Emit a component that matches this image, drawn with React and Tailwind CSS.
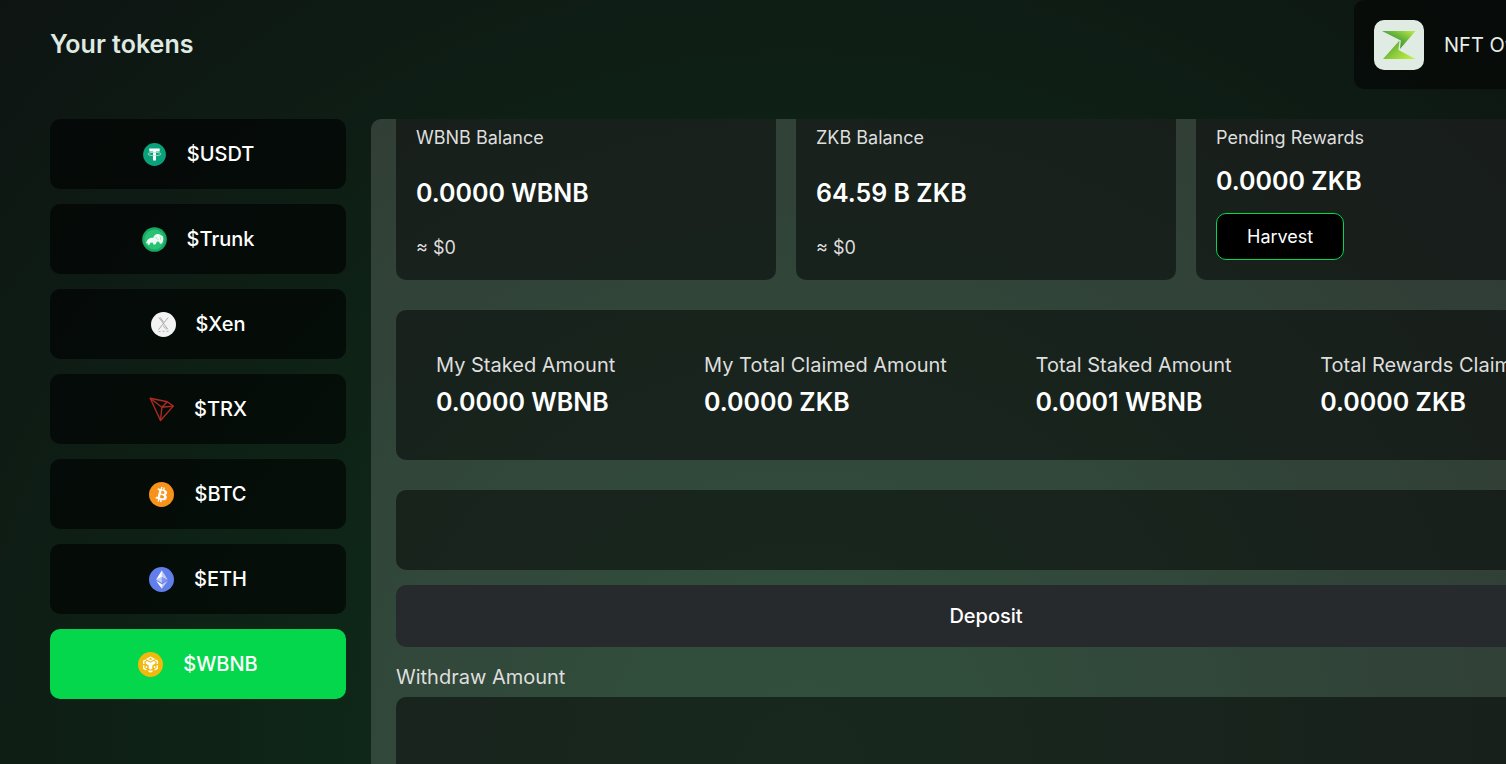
const UsdtIcon = () => (
  <svg viewBox="0 0 25 25" className="size-[25px]">
    <circle cx="12.5" cy="12.5" r="11.4" fill="#0aa27a" />
    <path d="M7.3 6.400h10.400v3h-3.700V18.500h-3V9.400H7.300z" fill="#fff" />
    <ellipse cx="12.5" cy="12" rx="6.5" ry="1.7" fill="none" stroke="#a9e0cf" strokeWidth="0.9" />
  </svg>
);

const TrunkIcon = () => (
  <svg viewBox="0 0 25 25" className="size-[25px]">
    <circle cx="12.5" cy="12.5" r="12.3" fill="#17a864" />
    <circle cx="12.5" cy="12.5" r="10" fill="#28c274" />
    <path
      d="M4.2 16.6c.3-2.600 1.500-4.600 3.800-5.400 1.200-.5 2.300-.4 3.200-.3.300-1.700 1.600-3 3.300-3.600 1.500-.6 2.900-.3 3.900.6l2.400 1.300c.7 2.400.5 4.700-.5 6.600-.6 1.200-1.600 1.300-2.400.7l-1-1.700-1.900-.2-1.300 2.600-2.200.6-.6-2-2.300-.2-.9 2-1.700.5-.4-1.800z"
      fill="#f1fbf5"
    />
    <path d="M13.600 9.600c.4 1.700 1.300 2.700 3 2.800M18.300 9.500l.3 3.700" fill="none" stroke="#8bdcb1" strokeWidth="0.7" />
  </svg>
);

const XenIcon = () => (
  <svg viewBox="0 0 25 25" className="size-[25px]">
    <circle cx="12.5" cy="12.5" r="12.5" fill="#f3f3f3" />
    <path
      d="M7.800 5.500 17 17.300M17.200 5.500 7.500 17.700M9.200 5.300l3.500 5M12 13.800l3.800 3.600"
      fill="none"
      stroke="#a3a3a3"
      strokeWidth="0.9"
    />
    <path d="M7.500 19.500h2M11.500 19.300h2M15.500 19.300h2" stroke="#b4b4b4" strokeWidth="1" />
  </svg>
);

const TrxIcon = () => (
  <svg viewBox="0 0 25 25" className="size-[25px]" fill="none" stroke="#ad2a20" strokeWidth="1.4" strokeLinejoin="round">
    <path d="M1.200 1.300 18.300 4.800l6 4.300L11.500 23.500z" />
    <path d="M1.200 1.300 12.900 10.300 11.500 23.500M12.900 10.300l5.400-5.500M12.900 10.300l11.400-1.200" />
  </svg>
);

const BtcIcon = () => (
  <svg viewBox="0 0 32 32" className="size-[25px]">
    <circle cx="16" cy="16" r="16" fill="#f7931a" />
    <path
      fill="#fff"
      d="M23.189 14.02c.314-2.096-1.283-3.223-3.465-3.975l.708-2.840-1.728-.43-.690 2.765c-.454-.114-.920-.220-1.385-.326l.695-2.783L15.596 6l-.708 2.839c-.376-.086-.746-.170-1.104-.260l.002-.009-2.384-.595-.460 1.846s1.283.294 1.256.312c.700.175.826.638.805 1.006l-.806 3.235c.048.012.110.030.180.057l-.183-.045-1.130 4.532c-.086.212-.303.531-.793.410.018.025-1.256-.313-1.256-.313l-.858 1.978 2.250.561c.418.105.828.215 1.231.318l-.715 2.872 1.727.430.708-2.840c.472.127.930.245 1.378.357l-.706 2.828 1.728.430.715-2.866c2.948.558 5.164.333 6.097-2.333.752-2.146-.037-3.385-1.588-4.192 1.130-.260 1.980-1.003 2.207-2.538zm-3.950 5.538c-.533 2.147-4.148.986-5.320.695l.950-3.805c1.172.293 4.929.872 4.370 3.110zm.535-5.569c-.487 1.953-3.495.960-4.470.717l.860-3.450c.975.243 4.118.696 3.610 2.733z"
    />
  </svg>
);

const EthIcon = () => (
  <svg viewBox="0 0 32 32" className="size-[25px]">
    <circle cx="16" cy="16" r="16" fill="#627eea" />
    <g fill="#fff">
      <path fillOpacity=".6" d="M16.498 4v8.870l7.497 3.350z" />
      <path d="M16.498 4 9 16.220l7.498-3.350z" />
      <path fillOpacity=".6" d="M16.498 21.968v6.027L24 17.616z" />
      <path d="M16.498 27.995v-6.028L9 17.616z" />
      <path fillOpacity=".2" d="m16.498 20.573 7.497-4.353-7.497-3.348z" />
      <path fillOpacity=".6" d="m9 16.220 7.498 4.353v-7.701z" />
    </g>
  </svg>
);

const BnbIcon = () => (
  <svg viewBox="0 0 25 25" className="size-[25px]">
    <circle cx="12.5" cy="12.5" r="12.5" fill="#f0b90b" />
    <g fill="none" stroke="#fff" strokeWidth="1.4">
      <path d="M9.300 7 12.500 5.200 15.700 7l-3.200 1.800z" />
      <path d="M7.900 7.900 5.700 9.200v2.700M17.100 7.900l2.200 1.300v2.700" />
      <path d="M5.700 13.300v3l2.700 1.600M19.300 13.300v3l-2.700 1.600" />
      <path d="M10.500 18.700l2 1.200 2-1.200" />
      <path d="M8.400 14v2M16.600 14v2" />
    </g>
    <path d="m7.700 9.700 1.600-.7 3.200 1.800 3.200-1.800 1.600.7v1.900l-3 1.800v3.200l-1.800 1.200-1.800-1.200v-3.200l-3-1.800z" fill="#fff" />
  </svg>
);

const LogoIcon = () => (
  <svg viewBox="0 0 50 50" className="size-[50px] shrink-0 rounded-[10px] bg-[#e0ebe3]">
    <defs>
      <linearGradient id="logoTop" x1="0.1" y1="0.8" x2="0.9" y2="0">
        <stop offset="0" stopColor="#2f8a3a" />
        <stop offset="0.5" stopColor="#5fae3b" />
        <stop offset="1" stopColor="#b4e645" />
      </linearGradient>
      <linearGradient id="logoBottom" x1="0" y1="0.2" x2="1" y2="0.8">
        <stop offset="0" stopColor="#3f9a36" />
        <stop offset="0.5" stopColor="#8ecb3c" />
        <stop offset="1" stopColor="#bdf043" />
      </linearGradient>
    </defs>
    <path d="M9 39 25.500 20.500 24.500 30l17 9z" fill="url(#logoBottom)" />
    <path d="M8 11h33.500L26 29l.8-8.500z" fill="url(#logoTop)" />
  </svg>
);

const tokens = [
  { name: "$USDT", Icon: UsdtIcon },
  { name: "$Trunk", Icon: TrunkIcon },
  { name: "$Xen", Icon: XenIcon },
  { name: "$TRX", Icon: TrxIcon },
  { name: "$BTC", Icon: BtcIcon },
  { name: "$ETH", Icon: EthIcon },
  { name: "$WBNB", Icon: BnbIcon, active: true },
];

const balances = [
  { label: "WBNB Balance", value: "0.0000 WBNB", usd: "≈ $0" },
  { label: "ZKB Balance", value: "64.59 B ZKB", usd: "≈ $0" },
];

const stats = [
  { label: "My Staked Amount", value: "0.0000 WBNB" },
  { label: "My Total Claimed Amount", value: "0.0000 ZKB" },
  { label: "Total Staked Amount", value: "0.0001 WBNB" },
  { label: "Total Rewards Claimed", value: "0.0000 ZKB" },
];

const TokenButton = ({ name, Icon, active }) => (
  <button
    type="button"
    className={`flex h-[70px] w-full items-center justify-center gap-5 rounded-[10px] text-xl font-medium text-white ${
      active ? "bg-[#05d74c]" : "bg-black/60"
    }`}
  >
    <Icon />
    {name}
  </button>
);

const App = () => {
  return (
    <div className="h-screen overflow-hidden font-['Inter',sans-serif] text-white">
      {/* Content is wider than small windows, the right side runs off the edge */}
      <div className="flex h-full w-full min-w-[1601px] flex-col bg-[radial-gradient(ellipse_at_bottom,#0e331b_0%,#0e1412_100%)] pl-[50px]">
        <header className="flex h-[89px] shrink-0 items-center justify-between">
          <h1 className="text-[25px] font-semibold text-[#dfeae2]">Your tokens</h1>
          <div className="flex h-full w-[247px] items-center gap-5 rounded-[10px] bg-black/50 pl-5">
            <LogoIcon />
            <span className="whitespace-nowrap text-xl text-[#e6efe8]">NFT Owned</span>
          </div>
        </header>

        <div className="mt-[30px] flex min-h-0 flex-1 gap-[25px]">
          <nav className="flex w-[296px] shrink-0 flex-col gap-[15px]">
            {tokens.map((token) => (
              <TokenButton key={token.name} {...token} />
            ))}
          </nav>

          <main className="flex-1 overflow-hidden rounded-tl-[10px] bg-white/15 px-[25px]">
            <section className="grid grid-cols-3 gap-5">
              {balances.map((item) => (
                <div
                  key={item.label}
                  className="flex h-[161px] flex-col justify-between rounded-b-[10px] bg-black/50 px-5 pt-[5px] pb-[18px]"
                >
                  <p className="text-lg text-[#dedede]">{item.label}</p>
                  <p className="text-[25px] leading-[38px] font-semibold">{item.value}</p>
                  <p className="text-lg text-[#dedede]">{item.usd}</p>
                </div>
              ))}
              <div className="flex h-[161px] flex-col items-start rounded-b-[10px] bg-black/50 px-5 pt-[5px] pb-5">
                <p className="text-lg text-[#dedede]">Pending Rewards</p>
                <p className="mt-2.5 text-[25px] leading-[38px] font-semibold">0.0000 ZKB</p>
                <button
                  type="button"
                  className="mt-auto h-[47px] rounded-[10px] border border-[#05d74c] bg-black px-[30px] text-lg"
                >
                  Harvest
                </button>
              </div>
            </section>

            <section className="mt-[30px] flex h-[150px] items-center justify-between rounded-[10px] bg-black/50 px-10 pt-0.5">
              {stats.map((item) => (
                <div key={item.label} className="whitespace-nowrap">
                  <p className="text-xl text-[#dedede]">{item.label}</p>
                  <p className="mt-1 text-[25px] leading-[38px] font-semibold">{item.value}</p>
                </div>
              ))}
            </section>

            <form className="mt-[30px]" onSubmit={(e) => e.preventDefault()}>
              <input
                type="text"
                aria-label="Deposit Amount"
                className="block h-20 w-full rounded-[10px] bg-black/50 px-5 text-xl outline-none"
              />
              <button
                type="submit"
                className="mt-[15px] block h-[62px] w-full rounded-[10px] bg-[#272a2d] text-xl font-medium"
              >
                Deposit
              </button>
            </form>

            <form className="mt-4" onSubmit={(e) => e.preventDefault()}>
              <label htmlFor="withdraw" className="block text-xl text-[#dedede]">
                Withdraw Amount
              </label>
              <input
                id="withdraw"
                type="text"
                className="mt-1.5 block h-20 w-full rounded-[10px] bg-black/50 px-5 text-xl outline-none"
              />
            </form>
          </main>
        </div>
      </div>
    </div>
  );
};

export default App;
